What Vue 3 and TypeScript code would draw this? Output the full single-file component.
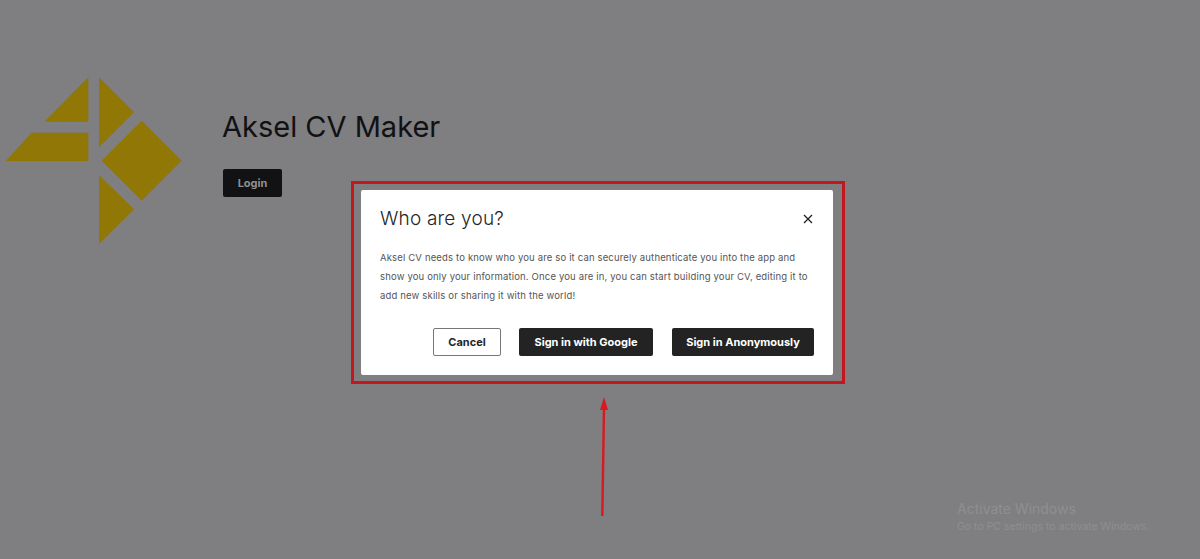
<script setup lang="ts">
// logo pieces, in the svg's own coordinates
const logoPieces: string[] = [
  '88.3,77.3 88.3,121.7 44.3,121.7',
  '31.7,132.7 88.3,132.7 88.3,161 5.7,161',
  '99,77.3 134,112.3 99,147.3',
  '141.7,120.7 181.7,160.7 141.7,200.7 101.7,160.7',
  '99,175 134,209.3 99,244',
]
</script>

<template>
  <div class="page">
    <header class="hero">
      <svg class="hero__logo" width="190" height="250" viewBox="0 0 190 250">
        <polygon v-for="piece in logoPieces" :key="piece" :points="piece" fill="#917706" />
      </svg>
      <div class="hero__text">
        <h1 class="hero__title">Aksel CV Maker</h1>
        <button type="button" class="btn btn--login">Login</button>
      </div>
    </header>

    <!-- red marker drawn over the screenshot -->
    <div class="marker" />
    <div class="dialog">
      <div class="dialog__header">
        <h2 class="dialog__title">Who are you?</h2>
        <svg class="dialog__close" width="10" height="10" viewBox="0 0 10 10">
          <path d="M1 1L9 9M9 1L1 9" stroke="#1c1c1c" stroke-width="1.2" fill="none" />
        </svg>
      </div>
      <p class="dialog__body">
        Aksel CV needs to know who you are so it can securely authenticate you into the app and
        show you only your information. Once you are in, you can start building your CV, editing it to
        add new skills or sharing it with the world!
      </p>
      <div class="dialog__footer">
        <button type="button" class="btn btn--outline">Cancel</button>
        <button type="button" class="btn btn--google">Sign in with Google</button>
        <button type="button" class="btn btn--anon">Sign in Anonymously</button>
      </div>
    </div>

    <svg class="arrow" width="20" height="124" viewBox="0 0 20 124">
      <path d="M9.3 120L11 12" stroke="#d81a20" stroke-width="2.4" fill="none" />
      <path d="M11 1L15 14H7Z" fill="#d81a20" />
    </svg>

    <div class="activation">
      <div class="activation__title">Activate Windows</div>
      <div class="activation__sub">Go to PC settings to activate Windows.</div>
    </div>
  </div>
</template>

<style scoped>
.page {
  position: relative;
  width: 1200px;
  height: 559px;
  overflow: hidden;
  background: #7f7e80;
  font-family: "Inter", "Open Sans", sans-serif;
}

/* 背景内容 */
.hero {
  display: flex;
  align-items: flex-start;
  gap: 32px;
}

.hero__logo {
  display: block;
  flex: none;
}

.hero__text {
  display: flex;
  flex-direction: column;
  align-items: flex-start;
  padding-top: 107px;
}

.hero__title {
  margin: 0;
  font-size: 29px;
  line-height: 40px;
  font-weight: 400;
  color: #111114;
}

.hero .btn--login {
  margin-top: 22px;
  margin-left: 1px;
}

/* 按钮 */
.btn {
  height: 28px;
  padding: 0;
  border: none;
  border-radius: 2px;
  font-family: "Inter", "Open Sans", sans-serif;
  font-size: 11px;
  font-weight: 700;
  color: #fff;
  background: #232323;
}

.btn--login {
  width: 59px;
  background: #121214;
  color: #8f8f8f;
}

.btn--outline {
  width: 68px;
  margin-right: -1px;
  background: #fff;
  color: #262626;
  border: 1px solid #777;
}

.btn--google {
  width: 134px;
}

.btn--anon {
  width: 142px;
}

/* 对话框 */
.marker {
  position: absolute;
  left: 351px;
  top: 181px;
  width: 494px;
  height: 203px;
  box-sizing: border-box;
  border: 3px solid #c4161c;
}

.dialog {
  position: absolute;
  left: 361px;
  top: 190px;
  width: 472px;
  height: 185px;
  box-sizing: border-box;
  padding: 17px 19px 0;
  background: #fff;
  border-radius: 2px;
}

.dialog__header {
  display: flex;
  justify-content: space-between;
  align-items: center;
  height: 24px;
}

.dialog__title {
  margin: 0;
  font-size: 19px;
  line-height: 24px;
  font-weight: 300;
  letter-spacing: 0.2px;
  color: #262626;
}

.dialog__close {
  margin-right: 1px;
}

.dialog__body {
  width: 436px;
  margin: 17px 0 0;
  font-size: 9.5px;
  line-height: 19px;
  letter-spacing: 0.16px;
  color: #555;
}

.dialog__footer {
  display: flex;
  justify-content: flex-end;
  gap: 19px;
  margin-top: 23px;
}

/* 标注箭头 */
.arrow {
  position: absolute;
  left: 593px;
  top: 396px;
}

.activation {
  position: absolute;
  left: 957px;
  top: 500px;
  color: #8f8f90;
}

.activation__title {
  font-size: 14px;
  line-height: 18px;
}

.activation__sub {
  font-size: 10.5px;
  line-height: 18px;
}
</style>
